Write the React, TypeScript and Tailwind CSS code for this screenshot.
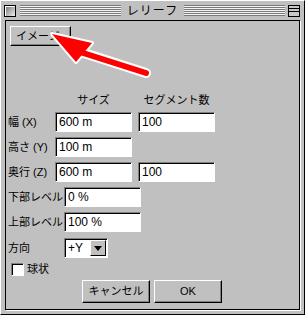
const font = "font-['Liberation_Sans','Noto_Sans_CJK_JP',sans-serif]";

function Field({ value, w = "w-[77px]" }: { value: string; w?: string }) {
  return (
    <div
      className={`${w} h-[20px] bg-white border border-t-[#808080] border-l-[#808080] border-r-white border-b-white shadow-[inset_1px_1px_0_#000] flex items-center pl-[3px] text-[12px] text-black`}
    >
      {value}
    </div>
  );
}

function Row({ label, children }: { label: string; children: React.ReactNode }) {
  return (
    <div className="flex items-center h-[20px] mt-[5px]">
      <div className="w-[49px] pl-[2px] text-[11px] leading-none whitespace-nowrap">{label}</div>
      {children}
    </div>
  );
}

function PushButton({ label, className }: { label: string; className: string }) {
  return (
    <div
      className={`${className} bg-[#c0c0c0] border border-t-white border-l-white border-r-black border-b-black shadow-[inset_-1px_-1px_0_#808080] flex items-center justify-center text-[11px]`}
    >
      {label}
    </div>
  );
}

export default function App() {
  return (
    <div className={`${font} relative w-[305px] h-[315px] bg-[#c0c0c0] border border-t-white border-l-white border-r-black border-b-black text-black`}>
      {/* Title bar */}
      <div className="flex items-center h-[19px] pl-[3px] pr-[4px]">
        <div className="w-[12px] h-[12px] border border-black bg-[linear-gradient(135deg,#6e6e6e,#f0f0f0)] shadow-[inset_1px_1px_0_#fff]" />
        <div className="ml-[4px] flex-1 h-[11px] bg-[repeating-linear-gradient(to_bottom,#7a7a7a_0px,#7a7a7a_1px,#f4f4f4_1px,#f4f4f4_2px)]" />
        <div className="px-[6px] text-[12px] tracking-[1px] leading-none">レリーフ</div>
        <div className="mr-[3px] flex-1 h-[11px] bg-[repeating-linear-gradient(to_bottom,#7a7a7a_0px,#7a7a7a_1px,#f4f4f4_1px,#f4f4f4_2px)]" />
        <div className="w-[12px] h-[12px] border border-black bg-[#c8c8c8] flex flex-col">
          <div className="h-[3px] border-b border-black" />
          <div className="h-[3px] border-b border-black" />
        </div>
      </div>

      {/* Content panel */}
      <div className="ml-[4px] w-[295px] h-[290px] border border-black shadow-[1px_1px_0_#fff] flex flex-col">
        <PushButton label="イメージ" className="ml-[4px] mt-[5px] w-[61px] h-[20px] !justify-start pl-[5px]" />

        <div className="flex mt-[47px] h-[14px] items-center text-[11px]">
          <div className="w-[49px]" />
          <div className="w-[77px] text-center">サイズ</div>
          <div className="w-[6px]" />
          <div className="w-[77px] text-center">セグメント数</div>
        </div>

        <Row label="幅 (X)">
          <Field value="600 m" />
          <div className="w-[6px]" />
          <Field value="100" />
        </Row>
        <Row label="高さ (Y)">
          <Field value="100 m" />
        </Row>
        <Row label="奥行 (Z)">
          <Field value="600 m" />
          <div className="w-[6px]" />
          <Field value="100" />
        </Row>
        <div className="flex items-center h-[20px] mt-[5px]">
          <div className="w-[58px] pl-[2px] text-[11px] leading-none whitespace-nowrap">下部レベル</div>
          <Field value="0 %" />
        </div>
        <div className="flex items-center h-[20px] mt-[5px]">
          <div className="w-[58px] pl-[2px] text-[11px] leading-none whitespace-nowrap">上部レベル</div>
          <Field value="100 %" />
        </div>
        <div className="flex items-center h-[20px] mt-[6px]">
          <div className="w-[58px] pl-[2px] text-[11px] leading-none">方向</div>
          <div className="w-[44px] h-[20px] bg-white border border-t-[#808080] border-l-[#808080] border-r-white border-b-white shadow-[inset_1px_1px_0_#000] flex items-center pl-[3px] text-[12px]">
            <span className="flex-1">+Y</span>
            <div className="w-[16px] h-[16px] mr-[1px] bg-[#c0c0c0] border border-t-white border-l-white border-r-black border-b-black flex items-center justify-center">
              <svg width="8" height="5" viewBox="0 0 8 5"><path d="M0 0h8L4 5z" fill="#000" /></svg>
            </div>
          </div>
        </div>
        <div className="flex items-center mt-[4px] h-[14px] pl-[5px]">
          <div className="w-[13px] h-[13px] bg-white border border-t-[#808080] border-l-[#808080] border-r-white border-b-white shadow-[inset_1px_1px_0_#000]" />
          <span className="ml-[3px] text-[11px] leading-none">球状</span>
        </div>
        <div className="flex mt-[4px] pl-[76px] gap-[4px]">
          <PushButton label="キャンセル" className="w-[68px] h-[23px]" />
          <PushButton label="OK" className="w-[68px] h-[23px]" />
        </div>
      </div>

      {/* Red annotation arrow */}
      <svg className="absolute left-[-1px] top-[-1px] pointer-events-none" width="305" height="315" viewBox="0 0 305 315">
        <g stroke="#fff" strokeWidth="4" strokeLinejoin="round" fill="#fff">
          <line x1="84" y1="53" x2="146" y2="73" strokeWidth="10" strokeLinecap="round" />
          <polygon points="52,34 92,43 76,62" />
        </g>
        <line x1="80" y1="52" x2="146" y2="73" stroke="#f00" strokeWidth="6" strokeLinecap="round" />
        <polygon points="52,34 92,43 76,62" fill="#f00" />
      </svg>
    </div>
  );
}
